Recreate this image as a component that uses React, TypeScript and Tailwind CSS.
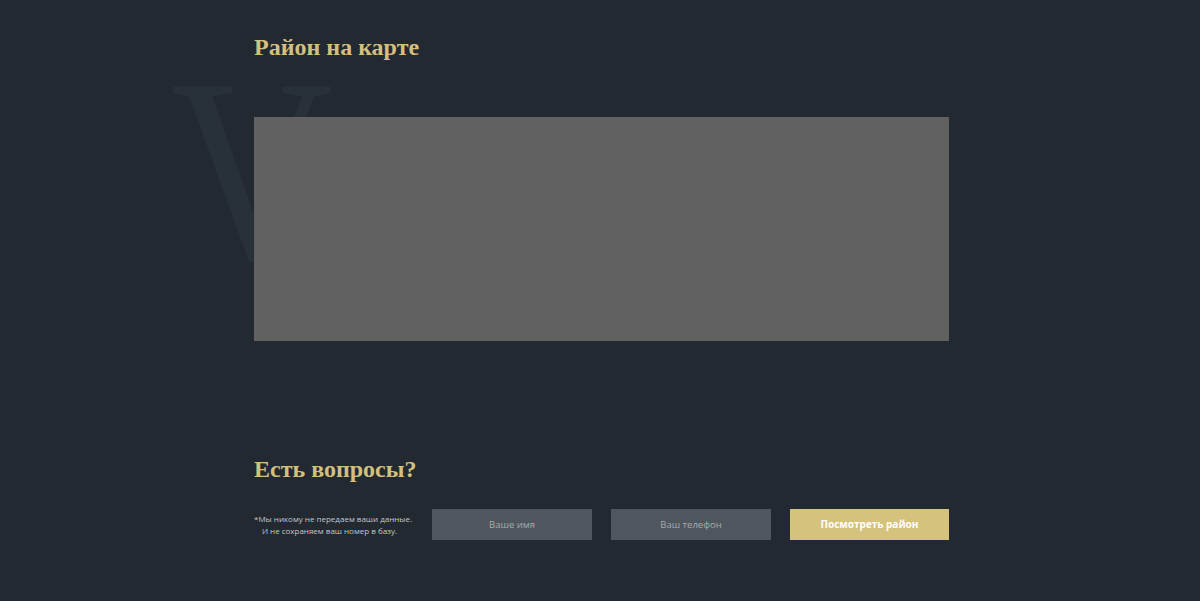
import React from "react";

const serif = { fontFamily: '"Liberation Serif", "DejaVu Serif", serif' };
const sans = { fontFamily: '"Open Sans", "Liberation Sans", sans-serif' };

const App = () => {
  return (
    <div className="relative w-full h-[601px] bg-[#232930] overflow-hidden" style={sans}>
      {/* faint watermark letter behind the map */}
      <div
        className="absolute left-[170px] top-[85px] origin-left scale-x-[0.86] text-[262px] leading-[170px] text-[#283038] select-none"
        style={serif}
        aria-hidden="true"
      >
        V
      </div>
      <div className="relative w-[695px] ml-[254px] pt-[30px] flex flex-col">
        <h2 className="text-[24px] leading-[34px] font-bold text-[#d3c07e]" style={serif}>
          Район на карте
        </h2>
        <div className="mt-[53px] h-[224px] bg-[#616161]" />
        <h2 className="mt-[111px] text-[24px] leading-[34px] font-bold text-[#d3c07e]" style={serif}>
          Есть вопросы?
        </h2>
        <div className="mt-[23px] flex items-center">
          <p className="w-[151px] whitespace-nowrap text-center text-[8px] leading-[12px] text-[#c3c7cc]">
            *Мы никому не передаем ваши данные.
            <br />И не сохраняем ваш номер в базу.
          </p>
          <div className="ml-[27px] flex gap-[19px]">
            <input
              placeholder="Ваше имя"
              className="w-[160px] h-[31px] bg-[#50565d] text-center text-[9.5px] text-white placeholder:text-[#a7abb0] outline-none"
            />
            <input
              placeholder="Ваш телефон"
              className="w-[160px] h-[31px] bg-[#50565d] text-center text-[9.5px] text-white placeholder:text-[#a7abb0] outline-none"
            />
            <button className="w-[159px] h-[31px] bg-[#d5c27c] text-[10px] font-bold text-white">
              Посмотреть район
            </button>
          </div>
        </div>
      </div>
    </div>
  );
};

export default App;
